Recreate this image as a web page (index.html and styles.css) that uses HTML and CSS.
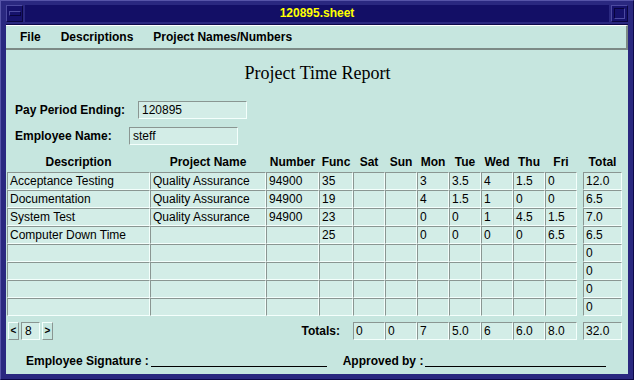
FILE: index.html
```html
<!DOCTYPE html>
<html lang="en">
<head>
    <meta charset="UTF-8">
    <title>120895.sheet</title>
    <link rel="stylesheet" href="styles.css">
</head>
<body>
    <div class="window">
        <div class="titlebar">
            <div class="tb-btn"><span class="tb-min"></span></div>
            <div class="tb-title">120895.sheet</div>
            <div class="tb-btn"><span class="tb-max"></span></div>
        </div>

        <div class="client">
            <div class="menubar">
                <span class="menu-item">File</span>
                <span class="menu-item">Descriptions</span>
                <span class="menu-item">Project Names/Numbers</span>
            </div>

            <div class="form">
                <h1 class="report-title">Project Time Report</h1>

                <div class="field-row pay-row">
                    <label class="field-label">Pay Period Ending:</label>
                    <div class="field pay-field">120895</div>
                </div>
                <div class="field-row emp-row">
                    <label class="field-label">Employee Name:</label>
                    <div class="field emp-field">steff</div>
                </div>

                <div class="sheet">
                    <div class="hd">Description</div>
                    <div class="hd">Project Name</div>
                    <div class="hd">Number</div>
                    <div class="hd">Func</div>
                    <div class="hd">Sat</div>
                    <div class="hd">Sun</div>
                    <div class="hd">Mon</div>
                    <div class="hd">Tue</div>
                    <div class="hd">Wed</div>
                    <div class="hd">Thu</div>
                    <div class="hd">Fri</div>
                    <div class="hd total-col">Total</div>

                    <div class="c">Acceptance Testing</div><div class="c">Quality Assurance</div><div class="c">94900</div><div class="c">35</div><div class="c"></div><div class="c"></div><div class="c">3</div><div class="c">3.5</div><div class="c">4</div><div class="c">1.5</div><div class="c">0</div><div class="c total-col">12.0</div>

                    <div class="c">Documentation</div><div class="c">Quality Assurance</div><div class="c">94900</div><div class="c">19</div><div class="c"></div><div class="c"></div><div class="c">4</div><div class="c">1.5</div><div class="c">1</div><div class="c">0</div><div class="c">0</div><div class="c total-col">6.5</div>

                    <div class="c">System Test</div><div class="c">Quality Assurance</div><div class="c">94900</div><div class="c">23</div><div class="c"></div><div class="c"></div><div class="c">0</div><div class="c">0</div><div class="c">1</div><div class="c">4.5</div><div class="c">1.5</div><div class="c total-col">7.0</div>

                    <div class="c">Computer Down Time</div><div class="c"></div><div class="c"></div><div class="c">25</div><div class="c"></div><div class="c"></div><div class="c">0</div><div class="c">0</div><div class="c">0</div><div class="c">0</div><div class="c">6.5</div><div class="c total-col">6.5</div>

                    <div class="c"></div><div class="c"></div><div class="c"></div><div class="c"></div><div class="c"></div><div class="c"></div><div class="c"></div><div class="c"></div><div class="c"></div><div class="c"></div><div class="c"></div><div class="c total-col">0</div>

                    <div class="c"></div><div class="c"></div><div class="c"></div><div class="c"></div><div class="c"></div><div class="c"></div><div class="c"></div><div class="c"></div><div class="c"></div><div class="c"></div><div class="c"></div><div class="c total-col">0</div>

                    <div class="c"></div><div class="c"></div><div class="c"></div><div class="c"></div><div class="c"></div><div class="c"></div><div class="c"></div><div class="c"></div><div class="c"></div><div class="c"></div><div class="c"></div><div class="c total-col">0</div>

                    <div class="c"></div><div class="c"></div><div class="c"></div><div class="c"></div><div class="c"></div><div class="c"></div><div class="c"></div><div class="c"></div><div class="c"></div><div class="c"></div><div class="c"></div><div class="c total-col">0</div>
                </div>

                <div class="sheet totals">
                    <div class="totals-lead">
                        <div class="pager">
                            <span class="pg-btn">&lt;</span>
                            <span class="pg-field">8</span>
                            <span class="pg-btn">&gt;</span>
                        </div>
                        <span class="totals-label">Totals:</span>
                    </div>
                    <div class="c">0</div><div class="c">0</div><div class="c">7</div><div class="c">5.0</div><div class="c">6</div><div class="c">6.0</div><div class="c">8.0</div><div class="c total-col">32.0</div>
                </div>

                <div class="signatures">
                    <span class="sig">Employee Signature :<span class="sig-line emp-line"></span></span>
                    <span class="sig">Approved by :<span class="sig-line appr-line"></span></span>
                </div>
            </div>
        </div>
    </div>
</body>
</html>
```

FILE: styles.css
```css
body {
    margin: 0;
    background-color: #24207a;
    font-family: 'Liberation Sans', Arial, sans-serif;
    font-size: 12px;
    color: black;
}

.window {
    box-sizing: border-box;
    width: 634px;
    height: 380px;
    padding: 5px 5px 5px 5px;
    background-color: #2a2880;
    border-top: 1px solid #5654a8;
    border-left: 1px solid #5654a8;
    border-right: 1px solid #0c0848;
    border-bottom: 1px solid #0c0848;
    display: flex;
    flex-direction: column;
}

/* title bar */
.titlebar {
    height: 17px;
    display: flex;
    margin: -1px 0 2px 0;
}

.tb-btn {
    box-sizing: border-box;
    width: 17px;
    height: 17px;
    background-color: #16126c;
    border-top: 1px solid #4c4aa0;
    border-left: 1px solid #4c4aa0;
    border-right: 1px solid #0a0640;
    border-bottom: 1px solid #0a0640;
    display: flex;
    align-items: center;
    justify-content: center;
}

.tb-min {
    width: 10px;
    height: 3px;
    border: 1px solid #4c4aa0;
    border-right-color: #08043c;
    border-bottom-color: #08043c;
}

.tb-max {
    width: 9px;
    height: 9px;
    border: 1px solid #08043c;
    border-right-color: #4c4aa0;
    border-bottom-color: #4c4aa0;
}

.tb-title {
    flex: 1;
    margin: 0 2px;
    background-color: #130f66;
    color: #ffff00;
    font-weight: bold;
    font-size: 12px;
    line-height: 17px;
    text-align: center;
}

/* client area */
.client {
    flex: 1;
    background-color: #c6e6df;
    border-top: 1px solid #0c0848;
    display: flex;
    flex-direction: column;
}

.menubar {
    height: 22px;
    border-top: 1px solid white;
    border-bottom: 2px solid #7c8a86;
    border-right: 2px solid #7c8a86;
    display: flex;
    align-items: center;
    gap: 20px;
    padding-left: 14px;
    font-weight: bold;
}

.menu-item {
    cursor: default;
}

.form {
    padding-left: 1px;
}

.report-title {
    margin: 12px 0 0 0;
    font-family: 'Liberation Serif', 'Times New Roman', serif;
    font-weight: normal;
    font-size: 18px;
    line-height: 22px;
    text-align: center;
}

.field-row {
    display: flex;
    align-items: center;
    padding-left: 8px;
}

.pay-row {
    margin-top: 17px;
}

.emp-row {
    margin-top: 8px;
}

.field-label {
    font-weight: bold;
}

.pay-row .field-label {
    width: 123px;
}

.emp-row .field-label {
    width: 114px;
}

.field {
    box-sizing: border-box;
    height: 18px;
    width: 109px;
    padding-left: 3px;
    line-height: 16px;
    background-color: #d3ede7;
    border: 1px solid;
    border-color: #8a9692 #f4fffc #f4fffc #8a9692;
}

/* sheet grid */
.sheet {
    display: grid;
    grid-template-columns: 143px 116px 53px 34px repeat(7, 32px) 45px;
}

.hd {
    margin-top: 7px;
    height: 20px;
    line-height: 20px;
    text-align: center;
    font-weight: bold;
}

.c {
    box-sizing: border-box;
    height: 18px;
    padding-left: 2px;
    line-height: 16px;
    white-space: nowrap;
    overflow: hidden;
    background-color: #d3ede7;
    border: 1px solid;
    border-color: #8a9692 #f4fffc #f4fffc #8a9692;
}

.total-col {
    margin-left: 6px;
}

.totals {
    margin-top: 6px;
}

.totals-lead {
    grid-column: span 4;
    display: flex;
    align-items: center;
    justify-content: space-between;
    padding-right: 13px;
}

.pager {
    display: flex;
    gap: 2px;
    margin-left: 1px;
}

.pg-btn,
.pg-field {
    box-sizing: border-box;
    height: 18px;
    line-height: 16px;
    border: 1px solid;
}

.pg-btn {
    width: 11px;
    text-align: center;
    font-weight: bold;
    font-size: 10px;
    border-color: #f4fffc #8a9692 #8a9692 #f4fffc;
}

.pg-field {
    width: 19px;
    padding-left: 3px;
    background-color: #d3ede7;
    border-color: #8a9692 #f4fffc #f4fffc #8a9692;
}

.totals-label {
    font-weight: bold;
}

.signatures {
    margin-top: 14px;
    display: flex;
    padding-left: 19px;
    gap: 16px;
    font-weight: bold;
}

.sig-line {
    display: inline-block;
    border-bottom: 1px solid black;
    margin-left: 2px;
    vertical-align: -2px;
}

.emp-line {
    width: 176px;
}

.appr-line {
    width: 181px;
}
```
